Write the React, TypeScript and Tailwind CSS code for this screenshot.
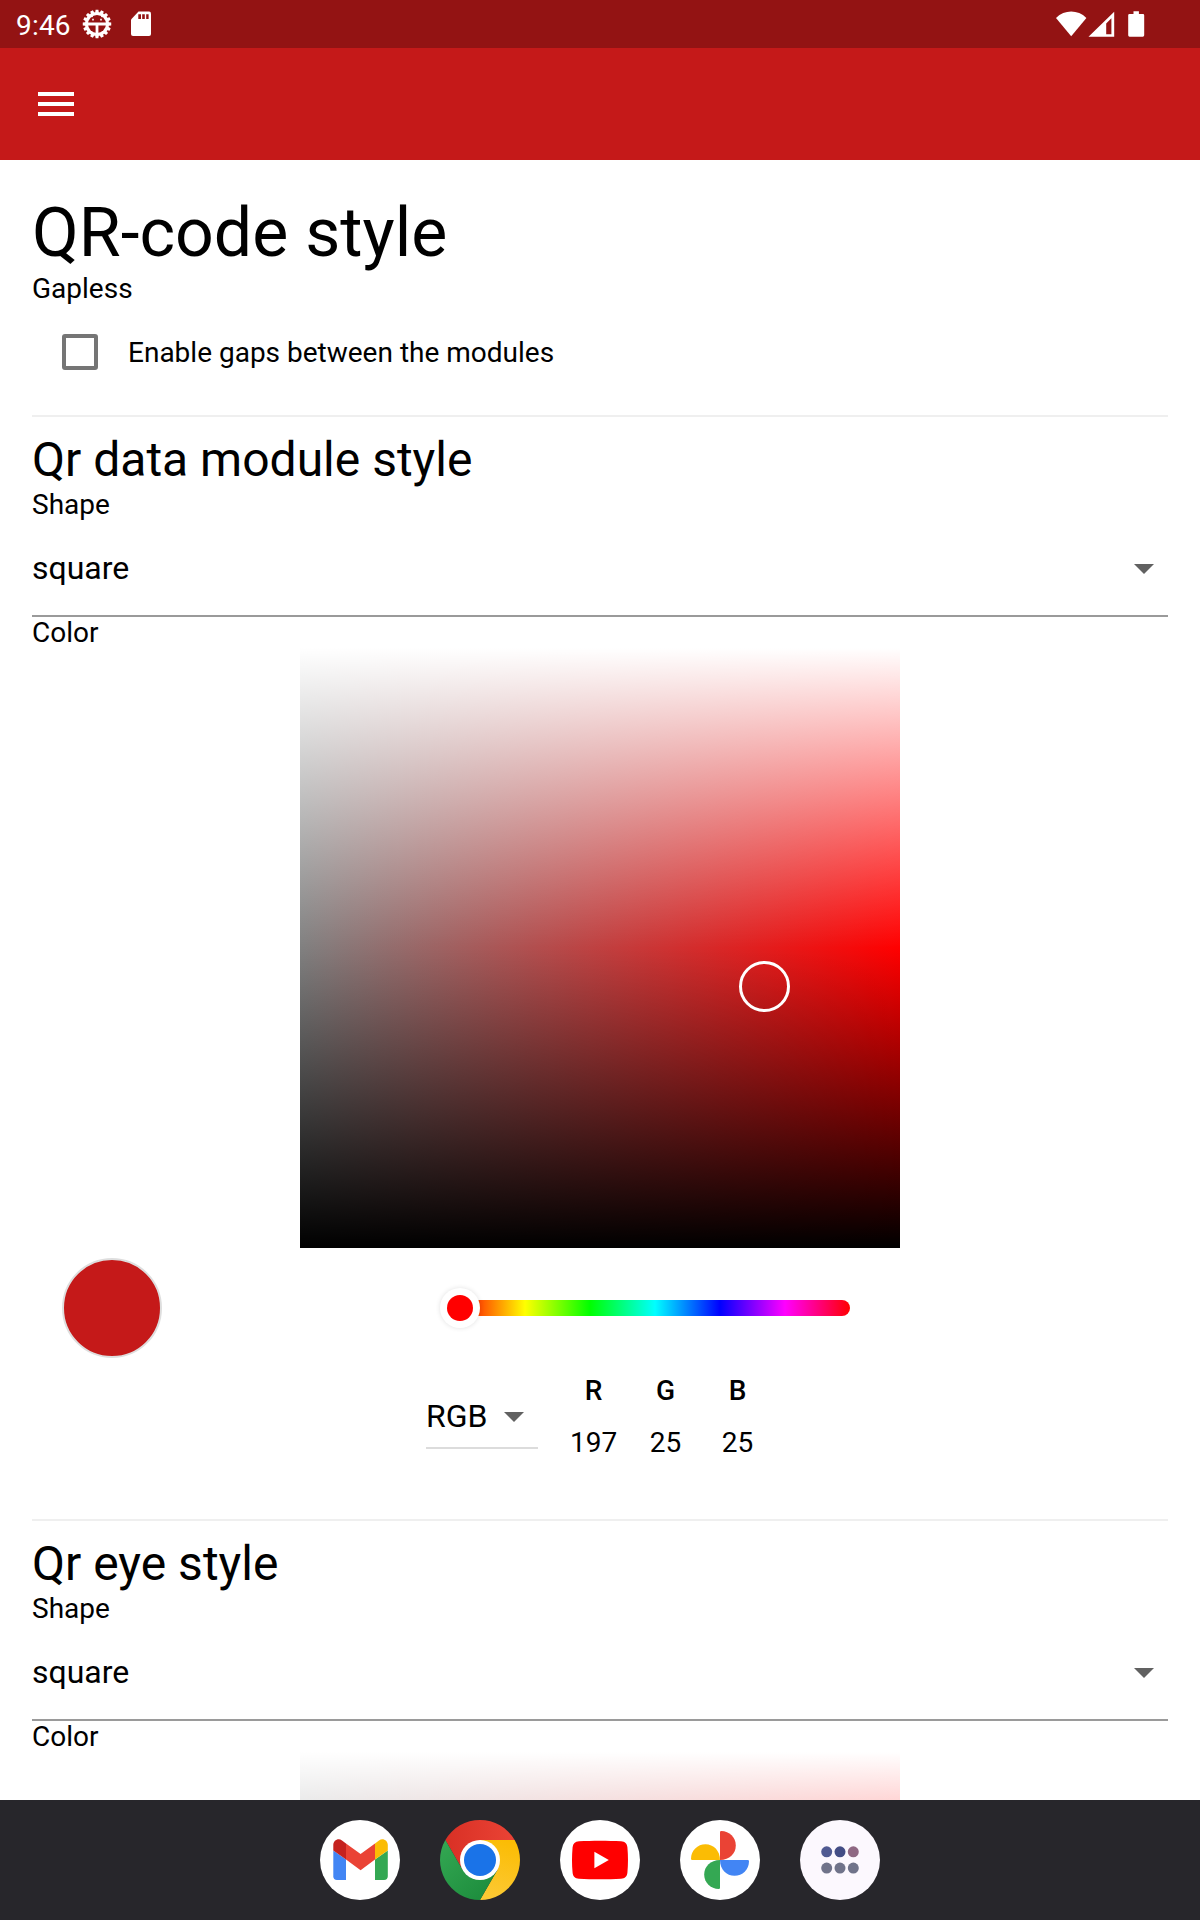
import React from "react";

const GEAR_TEETH = 16;

const gearOutline = Array.from({ length: GEAR_TEETH }, (_, i) => {
  const step = (Math.PI * 2) / GEAR_TEETH;
  const center = i * step;
  return [
    [-0.38, 12],
    [-0.25, 14.3],
    [0.25, 14.3],
    [0.38, 12],
  ]
    .map(([offset, radius]) => {
      const angle = center + offset * step;
      return `${(15 + radius * Math.sin(angle)).toFixed(2)},${(15 - radius * Math.cos(angle)).toFixed(2)}`;
    })
    .join(" ");
}).join(" ");

function StatusBar() {
  return (
    <div className="flex h-12 items-center bg-[#931313] text-white">
      <span className="ml-4 mt-[4px] w-[57px] text-[28px] leading-8 tracking-[0.2px]">9:46</span>
      <svg className="ml-[9px] h-[30px] w-[30px]" viewBox="0 0 30 30" fill="none" stroke="#fff">
        <polygon points={gearOutline} fill="#fff" stroke="none" />
        <circle cx="15" cy="15" r="9" fill="#931313" stroke="none" />
        <path d="M6 15h18M15 15v10" strokeWidth="2.8" />
        <path d="M10.2 10.6h1.600M18.2 10.6h1.600" strokeWidth="1.6" />
        <path d="M9 6l1.500 2M21 6l-1.500 2" strokeWidth="1.4" />
      </svg>
      <svg className="ml-[18px] h-[26px] w-[22px]" viewBox="0 0 22 26">
        <path d="M8.5.5H19a2 2 0 0 1 2 2V23a2 2 0 0 1-2 2H3a2 2 0 0 1-2-2V8.5z" fill="#fff" />
        <path d="M8.3 3.2H11V8H8.3zM12.2 3.2h2.6V8h-2.6zM16.2 3.2h2.4V8h-2.4z" fill="#931313" />
      </svg>
      <svg className="ml-auto mr-[55px] h-[28px] w-[89px]" viewBox="0 0 89 28" fill="#fff">
        <path d="M0 7.900C8.600-.6 21.800-.6 30.400 7.900L15.200 26.200z" />
        <path d="M58.200 1.700v25H32.500zM55.400 8.200l-5.200 5.300v10.700h5.200V8.200z" fillRule="evenodd" />
        <path d="M77.500 1.200h5.400V4H87a1.200 1.200 0 0 1 1.200 1.200v20.100a1.400 1.400 0 0 1-1.400 1.400H73.600a1.400 1.400 0 0 1-1.400-1.400V5.200a1.200 1.200 0 0 1 1.200-1.200h4.100z" />
      </svg>
    </div>
  );
}

function Arrow() {
  return (
    <svg className="h-[10px] w-5" viewBox="0 0 20 10">
      <path d="M0 0h20L10 10z" fill="#616161" />
    </svg>
  );
}

function ColorArea({ children }: { children?: React.ReactNode }) {
  return (
    <div className="relative mx-auto h-[600px] w-[600px] bg-[linear-gradient(to_right,#808080,#ff0000)]">
      <div className="h-full bg-[linear-gradient(to_bottom,#fff_0%,rgba(255,255,255,0)_50%,rgba(0,0,0,0)_50%,#000_100%)]" />
      {children}
    </div>
  );
}

function Channel({ name, value, width }: { name: string; value: number; width: string }) {
  return (
    <div className={`flex flex-col items-center ${width}`}>
      <span className="h-[52px] text-[28px] font-medium leading-8">{name}</span>
      <span className="text-[28px] leading-8">{value}</span>
    </div>
  );
}

function Picker() {
  return (
    <>
      <div className="flex h-[120px] items-center">
        <div className="ml-[30px] h-[100px] w-[100px] rounded-full border-2 border-[#dedede] bg-[#c51919]" />
        <div className="relative ml-[298px] h-4 w-[390px] rounded-r-full bg-[linear-gradient(to_right,#f00,#ff0,#0f0,#0ff,#00f,#f0f,#f00)]">
          <div className="absolute -left-5 -top-3 flex h-10 w-10 items-center justify-center rounded-full bg-white shadow-[0_0_5px_rgba(0,0,0,0.12)]">
            <div className="h-[26px] w-[26px] rounded-full bg-[#f00]" />
          </div>
        </div>
      </div>
      <div className="flex h-[151px] pl-[394px]">
        <div className="mt-[16px] flex h-[65px] w-28 items-center border-b-2 border-[#dcdcdc]">
          <span className="w-[78px] text-[32px] leading-9">RGB</span>
          <div className="pt-[2px]">
            <Arrow />
          </div>
        </div>
        <div className="mt-[7px] flex pl-[31.600px]">
          <Channel name="R" value={197} width="w-12" />
          <Channel name="G" value={25} width="ml-6 w-12" />
          <Channel name="B" value={25} width="ml-6 w-12" />
        </div>
      </div>
    </>
  );
}

function StyleSection({ title, children }: { title: string; children: React.ReactNode }) {
  return (
    <section>
      <h2 className="h-14 text-[48px] leading-[56px]">{title}</h2>
      <div className="h-8 text-[28px] leading-[34px]">Shape</div>
      <div className="flex h-[97px] items-center justify-between border-b-2 border-[#9a9a9a] pr-[14px]">
        <span className="text-[32px] leading-9">square</span>
        <div className="pt-[3px]">
          <Arrow />
        </div>
      </div>
      <div className="h-[31px] text-[28px] leading-[31px]">Color</div>
      {children}
    </section>
  );
}

function GmailIcon() {
  return (
    <svg viewBox="0 0 80 80" className="h-20 w-20">
      <circle cx="40" cy="40" r="40" fill="#fff" />
      <path d="M13.300 30.500L26 39.500V60h-9a3.700 3.700 0 0 1-3.700-3.700z" fill="#4285f4" />
      <path d="M67.800 30.500L55 39.500V60h9a3.800 3.800 0 0 0 3.800-3.700z" fill="#34a853" />
      <path d="M26 23.400l14.600 10.700L55 23.400v16.100L40.600 50.200 26 39.500z" fill="#ea4335" />
      <path d="M13.300 25v5.500L26 39.500V23.400l-4-2.900c-3.800-2.900-8.700 0-8.700 4.500z" fill="#c5221f" />
      <path d="M67.800 25v5.500L55 39.500V23.400l4-2.900c3.800-2.900 8.800 0 8.800 4.500z" fill="#fbbc04" />
    </svg>
  );
}

function ChromeIcon() {
  return (
    <svg viewBox="0 0 80 80" className="h-20 w-20">
      <defs>
        <linearGradient id="chrome-red" x1="0" x2="1"><stop stopColor="#d93025" /><stop offset="1" stopColor="#ea4335" /></linearGradient>
        <linearGradient id="chrome-yellow" x1="0.4" y1="1" x2="0.6" y2="0"><stop stopColor="#fcc934" /><stop offset="1" stopColor="#fbbc04" /></linearGradient>
        <linearGradient id="chrome-green" x1="0.8" y1="0.9" x2="0" y2="0"><stop stopColor="#1e8e3e" /><stop offset="1" stopColor="#34a853" /></linearGradient>
      </defs>
      <path d="M40 40L22.680 50 5.360 20A40 40 0 0 1 74.640 20H40z" fill="url(#chrome-red)" />
      <path d="M40 20h34.640A40 40 0 0 1 40 80l17.320-30L40 40z" fill="url(#chrome-yellow)" />
      <path d="M40 40l17.320 10L40 80A40 40 0 0 1 5.360 20l17.320 30z" fill="url(#chrome-green)" />
      <circle cx="40" cy="40" r="20" fill="#fff" />
      <circle cx="40" cy="40" r="16" fill="#1a73e8" />
    </svg>
  );
}

function YouTubeIcon() {
  return (
    <svg viewBox="0 0 80 80" className="h-20 w-20">
      <circle cx="40" cy="40" r="40" fill="#fff" />
      <path d="M19 21.200C32 20.500 48 20.500 61 21.200c4 .3 6 2.300 6.400 6 .8 8.500.8 17 0 25.600-.4 3.700-2.400 5.700-6.400 6-13 .7-29 .7-42 0-4-.3-6-2.300-6.400-6-.8-8.600-.8-17.100 0-25.600.4-3.700 2.400-5.700 6.400-6z" fill="#f00" />
      <path d="M34.400 31.700v16.600L48.800 40z" fill="#fff" />
    </svg>
  );
}

function PhotosIcon() {
  return (
    <svg viewBox="0 0 80 80" className="h-20 w-20">
      <circle cx="40" cy="40" r="40" fill="#fff" />
      <path d="M40 12.200a1.200 1.200 0 0 1 1.200-1.200C49.500 11 55.800 17.500 55.800 25.500S49.500 40 40 40z" fill="#ea4335" />
      <path d="M67.800 40a1.200 1.200 0 0 1 1.200 1.200C69 49.500 62.500 55.800 54.500 55.800S40 49.500 40 40z" fill="#4285f4" />
      <path d="M40 67.800a1.200 1.200 0 0 1-1.200 1.200C30.500 69 24.200 62.500 24.200 54.500S30.500 40 40 40z" fill="#34a853" />
      <path d="M12.200 40a1.200 1.200 0 0 1-1.200-1.200C11 30.500 17.500 24.200 25.500 24.200S40 30.500 40 40z" fill="#fbbc04" />
    </svg>
  );
}

function AppsIcon() {
  return (
    <svg viewBox="0 0 80 80" className="h-20 w-20">
      <circle cx="40" cy="40" r="40" fill="#fcf8fe" />
      <circle cx="26.700" cy="31.800" r="5.500" fill="#505a92" />
      <circle cx="40" cy="31.800" r="5.500" fill="#434d85" />
      <circle cx="53.300" cy="31.800" r="5.500" fill="#8f6883" />
      <g fill="#70738a">
        <circle cx="26.700" cy="48.100" r="5.500" />
        <circle cx="40" cy="48.100" r="5.500" />
        <circle cx="53.300" cy="48.100" r="5.500" />
      </g>
    </svg>
  );
}

export default function App() {
  return (
    <div className="flex h-[1920px] w-[1200px] flex-col overflow-hidden bg-white font-['Roboto',sans-serif] text-black">
      <StatusBar />
      <header className="flex h-28 items-center bg-[#c51919] pl-[38px]">
        <div className="flex w-9 flex-col gap-[6px]">
          <div className="h-1 bg-white" />
          <div className="h-1 bg-white" />
          <div className="h-1 bg-white" />
        </div>
      </header>
      <main className="min-h-0 flex-1 overflow-hidden px-8 pt-8">
        <h1 className="h-20 text-[68px] leading-[82px]">QR-code style</h1>
        <div className="h-8 text-[28px] leading-[34px]">Gapless</div>
        <div className="flex h-24 items-center">
          <div className="ml-[30px] h-9 w-9 rounded-[3px] border-4 border-[#757575]" />
          <span className="ml-[30px] pt-[2px] text-[28px] leading-8">Enable gaps between the modules</span>
        </div>
        <div className="mb-[15px] mt-[15px] h-[2px] bg-[#efefef]" />
        <StyleSection title="Qr data module style">
          <ColorArea>
            <div className="absolute left-[439px] top-[313px] h-[51px] w-[51px] rounded-full border-[3px] border-white" />
          </ColorArea>
          <Picker />
        </StyleSection>
        <div className="mb-[15px] h-[2px] bg-[#efefef]" />
        <StyleSection title="Qr eye style">
          <ColorArea />
        </StyleSection>
      </main>
      <nav className="flex h-[120px] shrink-0 items-center justify-center gap-10 bg-[#27262b]">
        <GmailIcon />
        <ChromeIcon />
        <YouTubeIcon />
        <PhotosIcon />
        <AppsIcon />
      </nav>
    </div>
  );
}
